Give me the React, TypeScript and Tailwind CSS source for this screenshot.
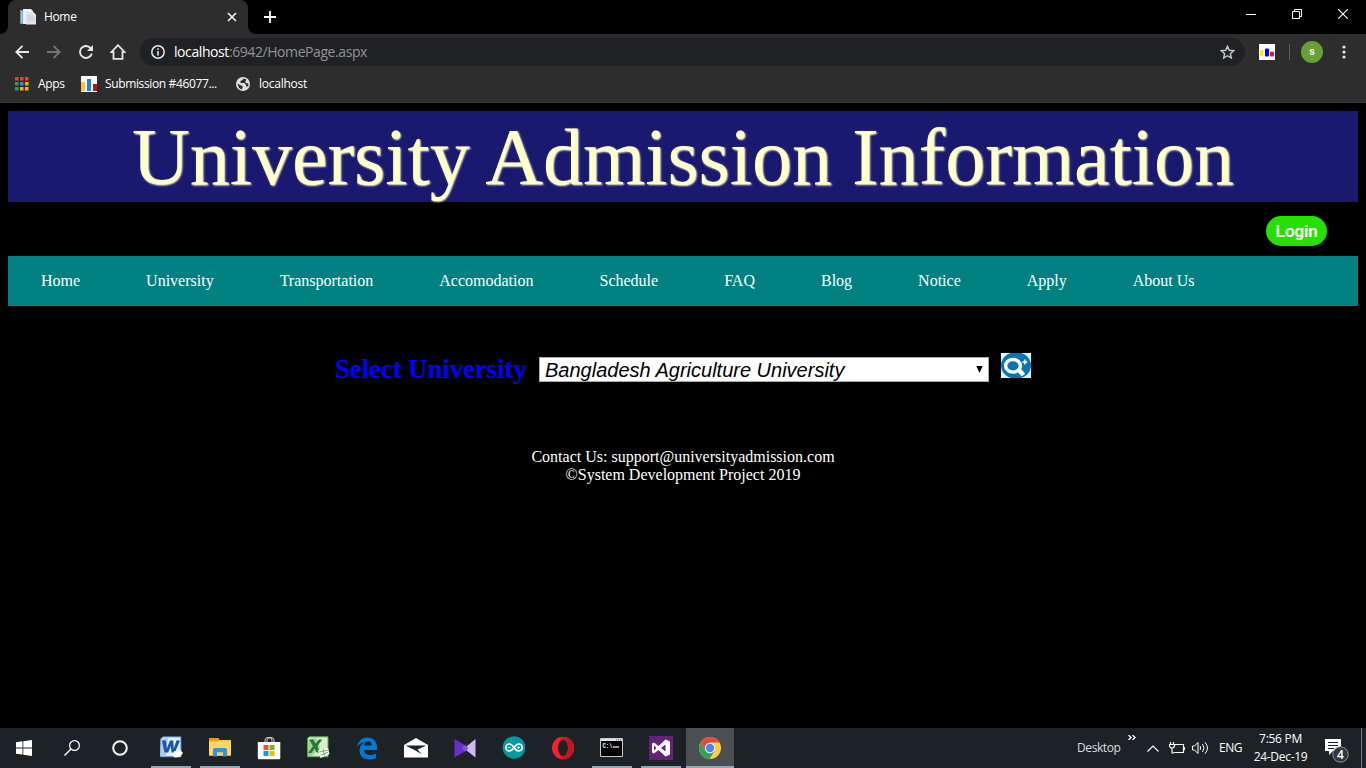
import React from 'react';

const UI = "font-['Open_Sans',sans-serif]";
const SERIF = "font-['Liberation_Serif',serif]";
const SANS = "font-['Liberation_Sans',sans-serif]";

function PageIcon() {
  return (
    <svg width="16" height="16" viewBox="0 0 16 16">
      <path d="M0 1h3v14H0z" fill="#5b9bc4" />
      <path d="M1 2h1.5v12H1z" fill="#9ecbe6" />
      <path d="M3 0h8l2 2v13H3z" fill="#eef1f4" />
      <path d="M6 3h7l3 3v9.5H6z" fill="#dfe3e8" />
      <path d="M13 3v3h3z" fill="#fff" />
      <path d="M7.500 7h5M7.500 9h7M7.500 11h7" stroke="#c3c9d2" />
    </svg>
  );
}

function TitleBar() {
  return (
    <div className="flex h-[34px] items-end bg-black">
      <svg width="8" height="8" className="shrink-0"><path d="M8 0v8H0a8 8 0 0 0 8-8" fill="#2d2d2d" /></svg>
      <div className="flex h-[34px] w-[240px] items-center rounded-t-lg bg-[#2d2d2d] pl-3 pr-[11px]">
        <PageIcon />
        <span className={`ml-2 grow text-[12px] tracking-[-0.35px] text-white ${UI}`}>Home</span>
        <svg width="10" height="10" viewBox="0 0 10 10"><path d="M1 1l8 8M9 1L1 9" stroke="#f1f1f1" strokeWidth="1.700" /></svg>
      </div>
      <svg width="8" height="8" className="shrink-0"><path d="M0 0v8h8a8 8 0 0 1-8-8" fill="#2d2d2d" /></svg>
      <svg width="12" height="12" viewBox="0 0 12 12" className="mb-[11px] ml-2"><path d="M6 0v12M0 6h12" stroke="#fff" strokeWidth="1.800" /></svg>
      <div className="ml-auto flex h-[34px] items-start gap-[36px] pr-[18px] pt-[9px]">
        <svg width="10" height="10" viewBox="0 0 10 10"><path d="M0 5.500h10" stroke="#fff" /></svg>
        <svg width="10" height="10" viewBox="0 0 10 10"><path d="M.5 2.500h7v7h-7zM2.500 2.500v-2h7v7h-2" fill="none" stroke="#fff" /></svg>
        <svg width="10" height="10" viewBox="0 0 10 10"><path d="M0 0l10 10M10 0L0 10" stroke="#fff" strokeWidth="1.100" /></svg>
      </div>
    </div>
  );
}

function Toolbar() {
  return (
    <div className="flex h-9 items-center bg-[#2d2d2d] pl-[15px]">
      <svg width="14" height="14" viewBox="0 0 14 14"><path d="M14 7H1.500M7.500 .8L1.300 7l6.200 6.200" fill="none" stroke="#e6e6e6" strokeWidth="1.800" /></svg>
      <svg width="14" height="14" viewBox="0 0 14 14" className="ml-[18px]"><path d="M0 7h12.500M6.500 .8L12.700 7l-6.200 6.200" fill="none" stroke="#757575" strokeWidth="1.800" /></svg>
      <svg width="14" height="14" viewBox="0 0 14 14" className="ml-[18px]">
        <path d="M12 3.600A6 6 0 1 0 12.800 8.500" fill="none" stroke="#e6e6e6" strokeWidth="1.900" />
        <path d="M14 0v6H8z" fill="#e6e6e6" />
      </svg>
      <svg width="16" height="16" viewBox="0 0 16 16" className="ml-[17px]"><path d="M8 1.200L1.500 8H3.500v6.900h9V8h2z" fill="none" stroke="#e6e6e6" strokeWidth="1.800" /></svg>
      <div className="ml-[14px] flex h-7 w-[1105px] items-center rounded-full bg-[#202124] pl-[11px] pr-[10px]">
        <svg width="14" height="14" viewBox="0 0 14 14"><circle cx="7" cy="7" r="6.200" fill="none" stroke="#e8e8e8" strokeWidth="1.500" /><path d="M7 6v4.500M7 3.200v1.600" stroke="#e8e8e8" strokeWidth="1.600" /></svg>
        <span className={`ml-[9px] grow pb-[2px] text-[14px] tracking-[-0.42px] text-[#929395] ${UI}`}><span className="text-white">localhost</span>:6942/HomePage.aspx</span>
        <svg width="15" height="14" viewBox="0 0 15 14"><path d="M7.500 1.200l1.750 4.100 4.450.4-3.350 2.950 1 4.350-3.850-2.300L3.650 13l1-4.350L1.300 5.700l4.450-.4z" fill="none" stroke="#c8c8c8" strokeWidth="1.400" /></svg>
      </div>
      <svg width="16" height="16" viewBox="0 0 16 16" className="ml-[14px]">
        <path d="M0 0h16v16H0z" fill="#fff" />
        <rect x="1" y="6" width="3.500" height="6" rx="1" fill="#f8ee00" />
        <rect x="6" y="4.500" width="4" height="8" rx="1" fill="#00f" />
        <rect x="11" y="7.500" width="4" height="5" rx="1.500" fill="#f0101c" />
      </svg>
      <div className="ml-[14px] h-4 w-px bg-[#5c5c5c]" />
      <div className="ml-[11px] flex h-[22px] w-[22px] items-center justify-center rounded-full bg-[#689f38] font-['Roboto',sans-serif] text-[11px] font-medium text-white">s</div>
      <svg width="4" height="14" viewBox="0 0 4 14" className="ml-[19px]"><g fill="#e6e6e6"><circle cx="2" cy="2" r="1.600" /><circle cx="2" cy="7" r="1.600" /><circle cx="2" cy="12" r="1.600" /></g></svg>
    </div>
  );
}

const appDots = ['#ee3e36', '#ee3e36', '#ee3e36', '#2f9e54', '#3b82e8', '#f5b000', '#2f9e54', '#f5b000', '#f5b000'];

function Bookmarks() {
  return (
    <div className={`flex h-[33px] items-center border-b border-[#3a3a3a] bg-[#2d2d2d] pb-[5px] pl-[15px] text-[12px] text-white ${UI}`}>
      <svg width="14" height="14" viewBox="0 0 14 14">
        {appDots.map((c, i) => <rect key={i} x={(i % 3) * 5} y={Math.floor(i / 3) * 5} width="3.500" height="3.500" fill={c} />)}
      </svg>
      <span className="ml-[9px] w-[27px] whitespace-nowrap tracking-[-0.3px]">Apps</span>
      <svg width="16" height="16" viewBox="0 0 16 16" className="ml-4">
        <path d="M0 0h16v16H0z" fill="#fff" />
        <path d="M0 6h4v9H0z" fill="#f6c544" /><path d="M6 3h4v12H6z" fill="#1e88cf" /><path d="M12 8h4v7h-4z" fill="#b5161d" />
      </svg>
      <span className="ml-2 w-[112px] whitespace-nowrap tracking-[-0.36px]">Submission #46077...</span>
      <svg width="14" height="14" viewBox="0 0 14 14" className="ml-[19px]">
        <circle cx="7" cy="7" r="7" fill="#dedede" />
        <path d="M7.500 1.500L6.500 3 4.500 4v2h4l1.500 2v1.500l2.300-.2V6.500L9.500 6V4l1-1.500zM1.500 6.500L4 8l2.500 1v2L5.500 12.500 3 11z" fill="#2d2d2d" />
      </svg>
      <span className="ml-[9px] tracking-[-0.25px]">localhost</span>
    </div>
  );
}

const navItems = ['Home', 'University', 'Transportation', 'Accomodation', 'Schedule', 'FAQ', 'Blog', 'Notice', 'Apply', 'About Us'];

function WebPage() {
  return (
    <main className="flex grow flex-col bg-black px-2 pt-2">
      <h1 className={`h-[91px] whitespace-nowrap bg-[#191970] text-center text-[80px] leading-[93px] text-[#ffffcc] [text-shadow:1px_1px_2px_#ffffcc] ${SERIF}`}>University Admission Information</h1>
      <div className="flex h-[54px] justify-end pr-[31px] pt-[14px]">
        <button className={`h-[30px] w-[61px] rounded-[15px] bg-[#25e000] pt-[2px] text-[16px] font-bold tracking-[-0.3px] text-white ${SANS}`}>Login</button>
      </div>
      <nav className={`flex h-[50px] items-center gap-[66px] bg-[#008080] pl-[33px] text-[16px] text-white ${SERIF}`}>
        {navItems.map((n) => <a key={n}>{n}</a>)}
      </nav>
      <section className="flex h-[142px] justify-center pt-[47px]">
        <label className={`mt-px w-[191px] whitespace-nowrap text-[27px] font-bold leading-[30px] tracking-[-0.16px] text-[#0000ff] ${SERIF}`}>Select University</label>
        <div className={`ml-[13px] mt-1 flex h-[25px] w-[450px] items-center justify-between border border-[#a9a9a9] bg-white pl-[5px] pr-[5px] text-[20px] italic text-black ${SANS}`}>
          <span>Bangladesh Agriculture University</span>
          <svg width="7" height="7" viewBox="0 0 7 7" className="mb-px"><path d="M.3 0h6.400L3.500 7z" fill="#000" /></svg>
        </div>
        <svg width="30" height="25" viewBox="0 0 30 25" className="ml-3">
          <path d="M0 0h30v25H0z" fill="#ccffff" />
          <ellipse cx="15" cy="12.500" rx="15" ry="13.300" fill="#0774b5" />
          <ellipse cx="12" cy="12.800" rx="7.400" ry="6.300" fill="none" stroke="#fff" strokeWidth="3.400" />
          <path d="M17.500 16.500l5 5.500" stroke="#fff" strokeWidth="4.500" />
          <path d="M23.800 6.500v5M21.300 9h5" stroke="#fff" strokeWidth="1.500" />
        </svg>
      </section>
      <footer className={`text-center text-[16px] leading-[18px] text-white ${SERIF}`}>
        <p>Contact Us: support@universityadmission.com</p>
        <p>©System Development Project 2019</p>
      </footer>
    </main>
  );
}

function Slot({ children, open, active }: { children: React.ReactNode; open?: boolean; active?: boolean }) {
  return (
    <div className={`flex h-10 w-12 flex-col items-center ${active ? 'bg-[#4b4f52]' : ''}`}>
      <div className="flex h-[38px] items-center justify-center pr-px pt-[2px]">{children}</div>
      <div className={`h-[2px] ${active ? 'w-12' : 'w-10'} ${open || active ? 'bg-[#91a8b5]' : ''}`} />
    </div>
  );
}

function Icon({ children, size = 24 }: { children: React.ReactNode; size?: number }) {
  return <svg width={size} height={size} viewBox="0 0 24 24">{children}</svg>;
}

function Taskbar() {
  return (
    <footer className={`flex h-10 shrink-0 items-center bg-[#1d2226] text-white ${UI}`}>
      <Slot><svg width="16" height="16" viewBox="0 0 16 16"><path d="M0 2.200L6.500 1.300V7.500H0zM7.300 1.200L16 0v7.500H7.300zM0 8.400h6.500v6.200L0 13.700zM7.300 8.400H16V16l-8.700-1.200z" fill="#fff" /></svg></Slot>
      <Slot><svg width="16" height="16" viewBox="0 0 16 16"><circle cx="10.500" cy="5.500" r="4.900" fill="none" stroke="#fff" strokeWidth="1.200" /><path d="M7 9L.5 15.500" stroke="#fff" strokeWidth="1.400" /></svg></Slot>
      <Slot><svg width="16" height="16" viewBox="0 0 16 16"><circle cx="8" cy="8" r="6.800" fill="none" stroke="#f4f4f4" strokeWidth="2" /></svg></Slot>
      <div className="ml-[3px] flex gap-px">
        <Slot open>
          <Icon>
            <path d="M4 .8h18v20H2V2.500z" fill="#e4effa" stroke="#3c7fc4" />
            <path d="M1.500 3L9 1.500l-2 19H1z" fill="#a9cdf0" />
            <path d="M3 4.500h4l.8 8L11 4.500h3.200l.6 8L17.500 4.500H21l-5 12h-3.500l-.7-6.500-2.600 6.500H5.500z" fill="#1557ae" />
            <path d="M13.500 18l2-3 4 1 1-3 3.500 4-3 4-6 .5z" fill="#fff" />
          </Icon>
        </Slot>
        <Slot open>
          <Icon>
            <path d="M1 2h9l1.500 2H23v15.500H1z" fill="#f9c646" /><path d="M1 2h9l1.500 2-1.500 1.500H1z" fill="#e59f11" />
            <path d="M1 5.500h22V19.500H1z" fill="#ffd767" />
            <path d="M5 20.500v-6.500a2 2 0 0 1 2-2h10a2 2 0 0 1 2 2v6.500h-4V16.500H9v4z" fill="#3793d8" />
            <path d="M9 16.500h6v3H9z" fill="#f3cf72" />
          </Icon>
        </Slot>
        <Slot>
          <Icon>
            <path d="M8 7V4.500a3 3 0 0 1 3-3h1a3 3 0 0 1 3 3V7M10 7V4a4 4 0 0 1 4-2.500A3 3 0 0 1 17 4.500V7" fill="none" stroke="#d7d7d7" strokeWidth="1" />
            <path d="M.8 6h22.500v16a1.200 1.200 0 0 1-1.200 1.200H2A1.200 1.200 0 0 1 .8 22z" fill="#fff" />
            <path d="M6.500 9h5v5h-5z" fill="#f05022" /><path d="M12.500 9h5v5h-5z" fill="#7fba00" /><path d="M6.500 15h5v5h-5z" fill="#00a1f1" /><path d="M12.500 15h5v5h-5z" fill="#ffb900" />
          </Icon>
        </Slot>
        <Slot>
          <Icon>
            <path d="M3 .8h19v20H1.500V2.800z" fill="#d9edcf" stroke="#5aa151" />
            <path d="M2 4l8-2 4 9-8 9H2z" fill="#a2d38d" />
            <path d="M3 3.500h4.300l2.400 4.200 3-4.200h3.600l-5 6.800 3.700 6.200h-4.300l-2.200-4-3 4.500H2l5-7z" fill="#207b38" />
            <path d="M12 14l10-2 1.500 6-9 4z" fill="#fff" /><path d="M13.500 16l8.500-2M14.500 19l8-3M17 13l1.500 7" stroke="#68aa60" />
          </Icon>
        </Slot>
        <Slot>
          <Icon><path d="M2 11.200C2.800 5.500 6.800 1.500 12.500 1.500c6.200 0 9.700 4.600 9.700 10v2.400H9c.2 3.600 3.200 5 6.400 5 2.300 0 4.100-.6 5.700-1.500v4.500c-1.900 1-4.200 1.500-6.600 1.500-6 0-10-3.500-10-8.900 0-3.800 2-6.700 5-8.200C6 6.700 3.500 8.500 2 11.200zm7.200-1.600h7.600c0-2.700-1.400-4.300-3.800-4.300-2.300 0-3.600 2-3.800 4.300z" fill="#0078d7" /></Icon>
        </Slot>
        <Slot>
          <Icon><path d="M0 9L12 2l12 7v12.500H0z" fill="#fff" /><path d="M1.500 9.500h21l-9 4 4.300 4.700L10.500 14z" fill="#1d2226" /></Icon>
        </Slot>
        <Slot>
          <Icon><path d="M22.500 3v18.500L11 12.500z" fill="#ceb8f7" /><path d="M1.500 3L13 9.500c2 1.300 2 4 0 5.300L1.500 21.500z" fill="#6530cc" /><path d="M12 9l3 3-3 3.500-3-3.300z" fill="#8657dc" /></Icon>
        </Slot>
        <Slot>
          <Icon><circle cx="12" cy="11.500" r="11.300" fill="#009a9f" /><path d="M12 11.500C10 8.500 8.800 8 7.300 8a3.500 3.500 0 0 0 0 7c1.500 0 2.700-.5 4.700-3.500s3.200-3.500 4.700-3.500a3.500 3.500 0 0 1 0 7c-1.500 0-2.700-.5-4.700-3.500z" fill="none" stroke="#fff" strokeWidth="1.600" /><path d="M5.800 11.500h2.800M15.200 11.500H18M16.600 10.100v2.800" stroke="#fff" strokeWidth=".9" /></Icon>
        </Slot>
        <Slot>
          <Icon><path fillRule="evenodd" d="M12 .8a11 11.200 0 1 0 0 22.400A11 11.200 0 1 0 12 .8zm0 3c3 0 5 3.600 5 8.200s-2 8.200-5 8.200S7.200 16.600 7.200 12 9 3.800 12 3.800z" fill="#f4202f" /><path d="M15 1.300C21 3 23 8 23 12s-2 9-8 10.700c-3 .8-5-.7-6-2.200 4 2 8-1.500 8-8.500S13 1.500 9 3.500c1-1.500 3-3 6-2.200z" fill="#c51522" /></Icon>
        </Slot>
        <Slot open>
          <Icon><path d="M.5 2.500h22v18H.5z" fill="#000" stroke="#c6cbcf" /><path d="M1 3h21v2H1z" fill="#dce2e8" /><path d="M16 4h1M18 4h1M20 4h1" stroke="#456" /><text x="2.500" y="12" fontSize="7" fontWeight="bold" textLength="10" lengthAdjust="spacingAndGlyphs" fill="#fff" fontFamily="Liberation Mono, monospace">C:\</text><path d="M13 11h6" stroke="#fff" strokeWidth="1.200" /></Icon>
        </Slot>
        <Slot open>
          <Icon><path d="M0 0h24v24H0z" fill="#68217a" /><path fillRule="evenodd" d="M16.500 3.500L21 5.400v13.200l-4.500 1.900-7-6.500-4.500 3.500-2-1V7.500l2-1L9.500 10zm0 5L12 12l4.500 3.500zM5 9.500v5L7.500 12z" fill="#fff" /></Icon>
        </Slot>
        <Slot active>
          <Icon>
            <circle cx="12" cy="12" r="11" fill="#ffcd46" />
            <path d="M2.500 6.500A11 11 0 0 1 21.500 6.500H12v5.500l-4.800 2.700z" fill="#e24b3b" />
            <path d="M2.500 6.500L7.200 14.700 12 12l4.700 2.700L11.500 23A11 11 0 0 1 2.500 6.500z" fill="#2fa257" />
            <circle cx="12" cy="12" r="5.200" fill="#f1f4f8" /><circle cx="12" cy="12" r="4.200" fill="#4688f4" />
          </Icon>
        </Slot>
      </div>
      <div className="ml-auto flex h-10 items-center text-[12px] leading-[18px]">
        <span className="w-[43px] whitespace-nowrap tracking-[-0.4px] text-[#dedede]">Desktop</span>
        <svg width="8" height="5" viewBox="0 0 8 5" className="mb-[21px] ml-2"><path d="M.5 0L3 2.500.5 5M4.500 0L7 2.500 4.500 5" fill="none" stroke="#fff" strokeWidth="1.300" /></svg>
        <svg width="12" height="7" viewBox="0 0 12 7" className="ml-[11px]"><path d="M.5 6.500L6 1l5.500 5.500" fill="none" stroke="#fff" strokeWidth="1.200" /></svg>
        <svg width="16" height="12" viewBox="0 0 16 12" className="ml-[10px]"><path d="M6 2.500h8.500v8H5M15.500 5v3M1.500 0v2.500M4.500 0v2.500M.5 2.500h5v2L4 6H2L.5 4.500zM3 6v5h2" fill="none" stroke="#fff" strokeWidth="1.200" /></svg>
        <svg width="17" height="14" viewBox="0 0 17 14" className="ml-[7px]"><path d="M.5 5h2L6 1.500v11L2.500 9h-2zM8 5q1.500 2 0 4M10.500 3q3 4 0 8M13 1.200q5 5.800 0 11.600" fill="none" stroke="#fff" /></svg>
        <span className="ml-[10px] w-[23px] tracking-[-0.5px]">ENG</span>
        <div className="ml-[11px] flex w-[55px] flex-col items-center whitespace-nowrap pb-px tracking-[-0.3px]"><span>7:56 PM</span><span>24-Dec-19</span></div>
        <div className="relative ml-[17px] mt-[5px] h-6 w-6">
          <svg width="24" height="24" viewBox="0 0 24 24"><path d="M0 0h16v12H8l-4 4v-4H0z" fill="#fff" /><path d="M3 3.500h10M3 6.500h10M3 9.500h6" stroke="#1d2226" /><circle cx="15.500" cy="15.500" r="7.700" fill="#30363a" stroke="#8f9598" /></svg>
          <span className="absolute left-[12px] top-[7px] text-[12px] font-semibold leading-[17px]">4</span>
        </div>
        <div className="ml-[12px] h-10 w-px bg-[#70777c]" />
        <div className="w-1" />
      </div>
    </footer>
  );
}

export default function App() {
  return (
    <div className="flex h-screen w-full flex-col overflow-hidden bg-black">
      <TitleBar />
      <Toolbar />
      <Bookmarks />
      <WebPage />
      <Taskbar />
    </div>
  );
}
